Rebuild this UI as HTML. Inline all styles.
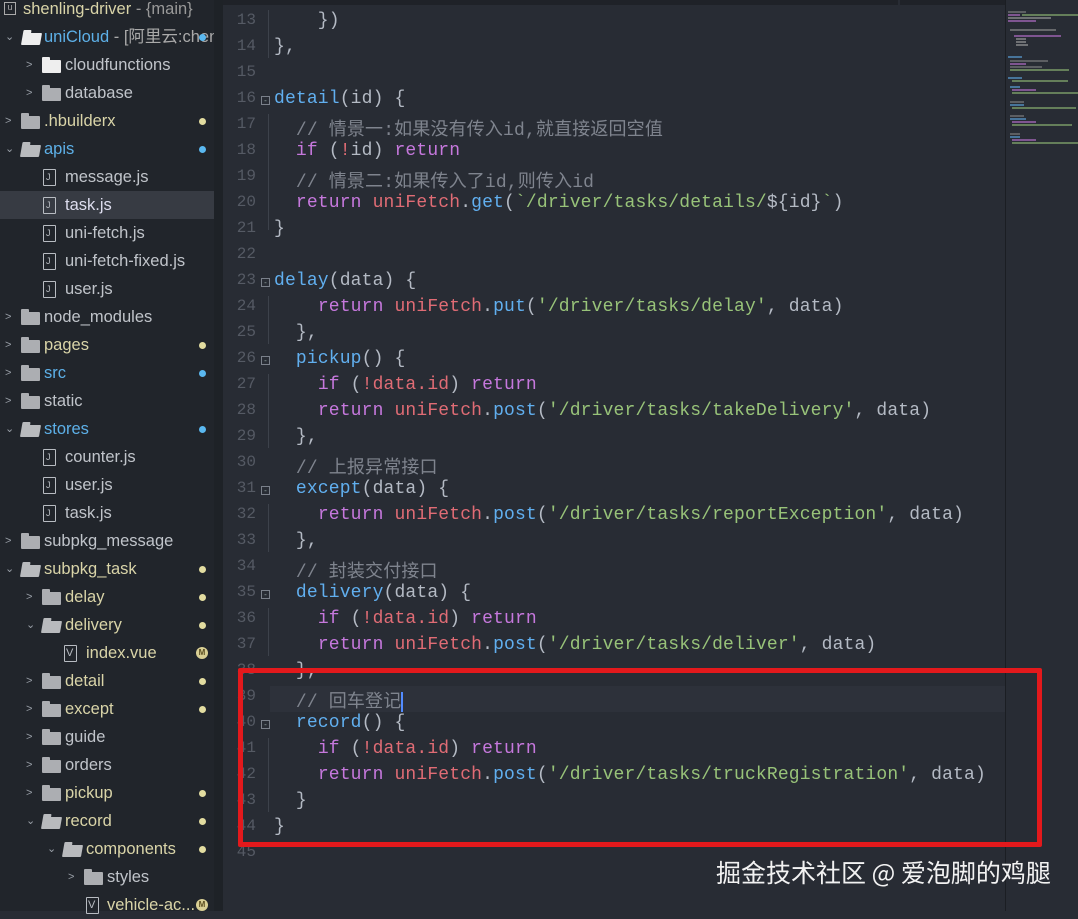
<!DOCTYPE html>
<html><head><meta charset="utf-8"><style>
*{margin:0;padding:0;box-sizing:border-box}
body{width:1078px;height:911px;background:#282c34;overflow:hidden;position:relative;font-family:"Liberation Sans","Noto Sans CJK SC",sans-serif}
#side{position:absolute;left:0;top:0;width:214px;height:911px;background:#21252b}
#sep{position:absolute;left:214px;top:0;width:9px;height:911px;background:#1e2227}
.r{position:absolute;left:0;width:214px;height:28px;line-height:28px;font-size:16.5px;color:#c0c4ca;white-space:nowrap}
.r.sel{background:#373b43}
.ar{position:absolute;top:0;font-size:11px;color:#9aa0a8}
.fd{position:absolute;top:9px;width:19px;height:13px;background:#acaeb2;border-radius:1px}
.fd.o{background:#b8babd;transform:skewX(-10deg);height:12px;top:10px}
.fd::before{content:"";position:absolute;left:0;top:-3px;width:8px;height:4px;background:inherit;border-radius:1px 1px 0 0}
.fl{position:absolute;top:6px;width:13px;height:17px;border:1.5px solid #b8bcc2;border-radius:1px}
.fl::after{content:"J";position:absolute;left:2px;top:-7px;font-size:9px;color:#b8bcc2}
.fl.v::after{content:"V";left:1px;font-size:11px}
.t{position:absolute;top:0}
.dot{position:absolute;left:199px;top:11px;width:7px;height:7px;border-radius:50%;background:#e2dca0}
.dot.b{background:#5ab8f0}
.m{position:absolute;left:196px;top:8px;width:12px;height:12px;border-radius:50%;background:#d9cf94;font-size:8px;line-height:12px;text-align:center;color:#5a4d20;font-weight:bold}
.y{color:#d9d4a8}.bl{color:#5db0e8}
#code{position:absolute;left:223px;top:0;width:782px;height:911px}
.ln{position:absolute;left:0;width:33px;text-align:right;font:16px "Liberation Mono",monospace;color:#555a64;height:26px;line-height:26px;margin-top:-3px}
.c{position:absolute;left:51px;height:26px;line-height:26px;font:18px "Liberation Mono","Noto Sans CJK SC",monospace;letter-spacing:0.15px;color:#b4bac4;white-space:pre;margin-top:1px}
.fo{position:absolute;left:38px;width:9px;height:9px;border:1px solid #7a808a;font-size:8px;line-height:7px;text-align:center;color:#9aa;margin-top:-1px}
.g{position:absolute;width:1px;background:#3d424b}
.f{color:#61afef}.k{color:#c678dd}.u{color:#e06c75}.s{color:#98c379}.cm{color:#7f848e}.p{color:#e06c75}
#mini{position:absolute;left:1005px;top:0;width:73px;height:911px;background:#282c34;border-left:1px solid #1b1e23}
</style></head><body>
<div id="side">
<div class="r" style="top:-5px"><span style="position:absolute;left:4px;top:7px;width:12px;height:13px;border:1.5px solid #aaa;font-size:9px;line-height:9px;text-align:center;color:#aaa">u</span><span class="t y" style="left:23px">shenling-driver <span style="color:#999">- {main}</span></span></div>
<div class="r" style="top:23px"><span class="ar" style="left:5px">⌄</span><div class="fd o" style="left:22px;background:#eee"></div><span class="t" style="left:44px"><span class="bl">uniCloud</span> <span style="color:#aaa">- [阿里云:chen</span></span><div class="dot b"></div></div>
<div class="r" style="top:51px"><span class="ar" style="left:26px">&gt;</span><div class="fd" style="left:42px;background:#eee"></div><span class="t" style="left:65px">cloudfunctions</span></div>
<div class="r" style="top:79px"><span class="ar" style="left:26px">&gt;</span><div class="fd" style="left:42px"></div><span class="t" style="left:65px">database</span></div>
<div class="r" style="top:107px"><span class="ar" style="left:5px">&gt;</span><div class="fd" style="left:21px"></div><span class="t y" style="left:44px">.hbuilderx</span><div class="dot"></div></div>
<div class="r" style="top:135px"><span class="ar" style="left:5px">⌄</span><div class="fd o" style="left:21px"></div><span class="t bl" style="left:44px">apis</span><div class="dot b"></div></div>
<div class="r" style="top:163px"><div class="fl" style="left:43px"></div><span class="t" style="left:65px">message.js</span></div>
<div class="r sel" style="top:191px"><div class="fl" style="left:43px"></div><span class="t" style="left:65px;color:#dde">task.js</span></div>
<div class="r" style="top:219px"><div class="fl" style="left:43px"></div><span class="t" style="left:65px">uni-fetch.js</span></div>
<div class="r" style="top:247px"><div class="fl" style="left:43px"></div><span class="t" style="left:65px">uni-fetch-fixed.js</span></div>
<div class="r" style="top:275px"><div class="fl" style="left:43px"></div><span class="t" style="left:65px">user.js</span></div>
<div class="r" style="top:303px"><span class="ar" style="left:5px">&gt;</span><div class="fd" style="left:21px"></div><span class="t" style="left:44px">node_modules</span></div>
<div class="r" style="top:331px"><span class="ar" style="left:5px">&gt;</span><div class="fd" style="left:21px"></div><span class="t y" style="left:44px">pages</span><div class="dot"></div></div>
<div class="r" style="top:359px"><span class="ar" style="left:5px">&gt;</span><div class="fd" style="left:21px"></div><span class="t bl" style="left:44px">src</span><div class="dot b"></div></div>
<div class="r" style="top:387px"><span class="ar" style="left:5px">&gt;</span><div class="fd" style="left:21px"></div><span class="t" style="left:44px">static</span></div>
<div class="r" style="top:415px"><span class="ar" style="left:5px">⌄</span><div class="fd o" style="left:21px"></div><span class="t bl" style="left:44px">stores</span><div class="dot b"></div></div>
<div class="r" style="top:443px"><div class="fl" style="left:43px"></div><span class="t" style="left:65px">counter.js</span></div>
<div class="r" style="top:471px"><div class="fl" style="left:43px"></div><span class="t" style="left:65px">user.js</span></div>
<div class="r" style="top:499px"><div class="fl" style="left:43px"></div><span class="t" style="left:65px">task.js</span></div>
<div class="r" style="top:527px"><span class="ar" style="left:5px">&gt;</span><div class="fd" style="left:21px"></div><span class="t" style="left:44px">subpkg_message</span></div>
<div class="r" style="top:555px"><span class="ar" style="left:5px">⌄</span><div class="fd o" style="left:21px"></div><span class="t y" style="left:44px">subpkg_task</span><div class="dot"></div></div>
<div class="r" style="top:583px"><span class="ar" style="left:26px">&gt;</span><div class="fd" style="left:42px"></div><span class="t y" style="left:65px">delay</span><div class="dot"></div></div>
<div class="r" style="top:611px"><span class="ar" style="left:26px">⌄</span><div class="fd o" style="left:42px"></div><span class="t y" style="left:65px">delivery</span><div class="dot"></div></div>
<div class="r" style="top:639px"><div class="fl v" style="left:64px"></div><span class="t y" style="left:86px">index.vue</span><div class="m">M</div></div>
<div class="r" style="top:667px"><span class="ar" style="left:26px">&gt;</span><div class="fd" style="left:42px"></div><span class="t y" style="left:65px">detail</span><div class="dot"></div></div>
<div class="r" style="top:695px"><span class="ar" style="left:26px">&gt;</span><div class="fd" style="left:42px"></div><span class="t y" style="left:65px">except</span><div class="dot"></div></div>
<div class="r" style="top:723px"><span class="ar" style="left:26px">&gt;</span><div class="fd" style="left:42px"></div><span class="t" style="left:65px">guide</span></div>
<div class="r" style="top:751px"><span class="ar" style="left:26px">&gt;</span><div class="fd" style="left:42px"></div><span class="t" style="left:65px">orders</span></div>
<div class="r" style="top:779px"><span class="ar" style="left:26px">&gt;</span><div class="fd" style="left:42px"></div><span class="t y" style="left:65px">pickup</span><div class="dot"></div></div>
<div class="r" style="top:807px"><span class="ar" style="left:26px">⌄</span><div class="fd o" style="left:42px"></div><span class="t y" style="left:65px">record</span><div class="dot"></div></div>
<div class="r" style="top:835px"><span class="ar" style="left:47px">⌄</span><div class="fd o" style="left:63px"></div><span class="t y" style="left:86px">components</span><div class="dot"></div></div>
<div class="r" style="top:863px"><span class="ar" style="left:68px">&gt;</span><div class="fd" style="left:84px"></div><span class="t" style="left:107px">styles</span></div>
<div class="r" style="top:891px"><div class="fl v" style="left:86px"></div><span class="t y" style="left:107px">vehicle-ac...</span><div class="m">M</div></div>
</div>
<div id="sep"></div>
<div style="position:absolute;left:223px;top:0;width:675px;height:5px;background:#1f2228"></div>
<div style="position:absolute;left:900px;top:0;width:105px;height:5px;background:#1f2228"></div>
<div id="code">
<div style="position:absolute;left:47px;top:686px;width:735px;height:26px;background:#2d313a"></div>
<div class="g" style="left:45px;top:10px;height:48px"></div>
<div class="g" style="left:45px;top:114px;height:116px"></div>
<div class="g" style="left:45px;top:296px;height:48px"></div>
<div class="g" style="left:45px;top:374px;height:74px"></div>
<div class="g" style="left:45px;top:504px;height:48px"></div>
<div class="g" style="left:45px;top:608px;height:48px"></div>
<div class="g" style="left:45px;top:738px;height:74px"></div>
<div class="ln" style="top:10px">13</div><div class="c" style="top:10px">    })</div>
<div class="ln" style="top:36px">14</div><div class="c" style="top:36px">},</div>
<div class="ln" style="top:62px">15</div>
<div class="ln" style="top:88px">16</div><div class="fo" style="top:97px">-</div><div class="c" style="top:88px"><span class="f">detail</span>(id) {</div>
<div class="ln" style="top:114px">17</div><div class="c" style="top:114px">  <span class="cm">// 情景一:如果没有传入id,就直接返回空值</span></div>
<div class="ln" style="top:140px">18</div><div class="c" style="top:140px">  <span class="k">if</span> (<span class="p">!</span>id) <span class="k">return</span></div>
<div class="ln" style="top:166px">19</div><div class="c" style="top:166px">  <span class="cm">// 情景二:如果传入了id,则传入id</span></div>
<div class="ln" style="top:192px">20</div><div class="c" style="top:192px">  <span class="k">return</span> <span class="u">uniFetch</span>.<span class="f">get</span>(<span class="s">`/driver/tasks/details/</span>${id}<span class="s">`</span>)</div>
<div class="ln" style="top:218px">21</div><div class="c" style="top:218px">}</div>
<div class="ln" style="top:244px">22</div>
<div class="ln" style="top:270px">23</div><div class="fo" style="top:279px">-</div><div class="c" style="top:270px"><span class="f">delay</span>(data) {</div>
<div class="ln" style="top:296px">24</div><div class="c" style="top:296px">    <span class="k">return</span> <span class="u">uniFetch</span>.<span class="f">put</span>(<span class="s">'/driver/tasks/delay'</span>, data)</div>
<div class="ln" style="top:322px">25</div><div class="c" style="top:322px">  },</div>
<div class="ln" style="top:348px">26</div><div class="fo" style="top:357px">-</div><div class="c" style="top:348px">  <span class="f">pickup</span>() {</div>
<div class="ln" style="top:374px">27</div><div class="c" style="top:374px">    <span class="k">if</span> (<span class="p">!data.id</span>) <span class="k">return</span></div>
<div class="ln" style="top:400px">28</div><div class="c" style="top:400px">    <span class="k">return</span> <span class="u">uniFetch</span>.<span class="f">post</span>(<span class="s">'/driver/tasks/takeDelivery'</span>, data)</div>
<div class="ln" style="top:426px">29</div><div class="c" style="top:426px">  },</div>
<div class="ln" style="top:452px">30</div><div class="c" style="top:452px">  <span class="cm">// 上报异常接口</span></div>
<div class="ln" style="top:478px">31</div><div class="fo" style="top:487px">-</div><div class="c" style="top:478px">  <span class="f">except</span>(data) {</div>
<div class="ln" style="top:504px">32</div><div class="c" style="top:504px">    <span class="k">return</span> <span class="u">uniFetch</span>.<span class="f">post</span>(<span class="s">'/driver/tasks/reportException'</span>, data)</div>
<div class="ln" style="top:530px">33</div><div class="c" style="top:530px">  },</div>
<div class="ln" style="top:556px">34</div><div class="c" style="top:556px">  <span class="cm">// 封装交付接口</span></div>
<div class="ln" style="top:582px">35</div><div class="fo" style="top:591px">-</div><div class="c" style="top:582px">  <span class="f">delivery</span>(data) {</div>
<div class="ln" style="top:608px">36</div><div class="c" style="top:608px">    <span class="k">if</span> (<span class="p">!data.id</span>) <span class="k">return</span></div>
<div class="ln" style="top:634px">37</div><div class="c" style="top:634px">    <span class="k">return</span> <span class="u">uniFetch</span>.<span class="f">post</span>(<span class="s">'/driver/tasks/deliver'</span>, data)</div>
<div class="ln" style="top:660px">38</div><div class="c" style="top:660px">  },</div>
<div class="ln" style="top:686px">39</div><div class="c" style="top:686px">  <span class="cm">// 回车登记</span><span style="display:inline-block;width:2px;height:20px;background:#528bff;vertical-align:middle"></span></div>
<div class="ln" style="top:712px">40</div><div class="fo" style="top:721px">-</div><div class="c" style="top:712px">  <span class="f">record</span>() {</div>
<div class="ln" style="top:738px">41</div><div class="c" style="top:738px">    <span class="k">if</span> (<span class="p">!data.id</span>) <span class="k">return</span></div>
<div class="ln" style="top:764px">42</div><div class="c" style="top:764px">    <span class="k">return</span> <span class="u">uniFetch</span>.<span class="f">post</span>(<span class="s">'/driver/tasks/truckRegistration'</span>, data)</div>
<div class="ln" style="top:790px">43</div><div class="c" style="top:790px">  }</div>
<div class="ln" style="top:816px">44</div><div class="c" style="top:816px">}</div>
<div class="ln" style="top:842px">45</div>
</div>
<div id="mini">
<svg width="73" height="150" style="position:absolute;left:0;top:8px">
<g stroke-width="2" opacity="0.55">
<line x1="2" y1="4" x2="20" y2="4" stroke="#888"/><line x1="2" y1="7" x2="14" y2="7" stroke="#c678dd"/><line x1="16" y1="7" x2="73" y2="7" stroke="#98c379"/>
<line x1="2" y1="10" x2="45" y2="10" stroke="#aaa"/><line x1="2" y1="13" x2="30" y2="13" stroke="#c678dd"/>
<line x1="4" y1="22" x2="50" y2="22" stroke="#999"/><line x1="8" y1="28" x2="55" y2="28" stroke="#c678dd"/>
<line x1="10" y1="31" x2="20" y2="31" stroke="#aaa"/><line x1="10" y1="34" x2="20" y2="34" stroke="#aaa"/><line x1="10" y1="37" x2="22" y2="37" stroke="#aaa"/>
<line x1="2" y1="49" x2="16" y2="49" stroke="#61afef"/><line x1="4" y1="53" x2="42" y2="53" stroke="#888"/><line x1="4" y1="56" x2="20" y2="56" stroke="#c678dd"/><line x1="4" y1="59" x2="36" y2="59" stroke="#888"/><line x1="4" y1="62" x2="63" y2="62" stroke="#98c379"/>
<line x1="2" y1="70" x2="16" y2="70" stroke="#61afef"/><line x1="6" y1="73" x2="62" y2="73" stroke="#98c379"/><line x1="4" y1="79" x2="14" y2="79" stroke="#61afef"/><line x1="6" y1="82" x2="30" y2="82" stroke="#c678dd"/><line x1="6" y1="85" x2="73" y2="85" stroke="#98c379"/>
<line x1="4" y1="94" x2="18" y2="94" stroke="#888"/><line x1="4" y1="97" x2="18" y2="97" stroke="#61afef"/><line x1="6" y1="100" x2="70" y2="100" stroke="#98c379"/>
<line x1="4" y1="108" x2="18" y2="108" stroke="#888"/><line x1="4" y1="111" x2="20" y2="111" stroke="#61afef"/><line x1="6" y1="114" x2="30" y2="114" stroke="#c678dd"/><line x1="6" y1="117" x2="66" y2="117" stroke="#98c379"/>
<line x1="4" y1="126" x2="14" y2="126" stroke="#888"/><line x1="4" y1="129" x2="14" y2="129" stroke="#61afef"/><line x1="6" y1="132" x2="30" y2="132" stroke="#c678dd"/><line x1="6" y1="135" x2="73" y2="135" stroke="#98c379"/>
</g></svg>
</div>
<div style="position:absolute;left:238px;top:668px;width:804px;height:179px;border:5px solid #e3191c;border-radius:2px"></div>
<div style="position:absolute;left:716px;top:855px;font-size:25px;color:#f2f2f2;font-family:'Noto Sans CJK SC',sans-serif;white-space:nowrap;line-height:34px">掘金技术社区 @ 爱泡脚的鸡腿</div>
</body></html>
